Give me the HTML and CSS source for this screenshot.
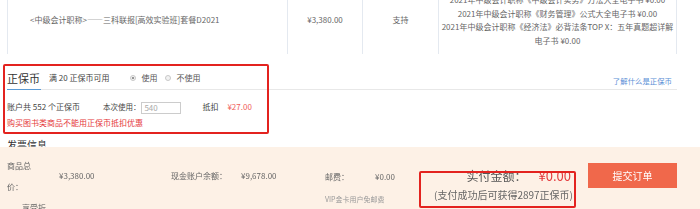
FILE: index.html
```html
<!DOCTYPE html>
<html lang="zh-CN">
<head>
<meta charset="utf-8">
<title>订单确认</title>
<link rel="stylesheet" href="styles.css">
</head>
<body>
<div class="order-table">
  <div class="cell cell-name">&lt;中级会计职称&gt;——三科联报[高效实验班]套餐D2021</div>
  <div class="cell cell-center">¥3,380.00</div>
  <div class="cell cell-center">支持</div>
  <div class="cell cell-gifts">
    <div>2021年中级会计职称《中级会计实务》方法大全电子书 ¥0.00</div>
    <div>2021年中级会计职称《财务管理》公式大全电子书 ¥0.00</div>
    <div>2021年中级会计职称《经济法》必背法条TOP X：五年真题超详解电子书 ¥0.00</div>
  </div>
</div>

<section class="coin">
  <div class="tabs">
    <div class="tab-active">正保币</div>
    <div class="tab-note">满 20 正保币可用</div>
    <label class="radio"><span class="dot checked"></span>使用</label>
    <label class="radio"><span class="dot"></span>不使用</label>
    <a class="learn">了解什么是正保币</a>
  </div>
  <div class="coin-row">
    <span class="balance">账户共 552 个正保币</span>
    <span class="use-label">本次使用：</span>
    <span class="input">540</span>
    <span class="deduct">抵扣</span>
    <span class="deduct-amt">¥27.00</span>
  </div>
  <div class="warn">购买图书类商品不能用正保币抵扣优惠</div>
  <div class="mark mark-coin"></div>
</section>

<h3 class="invoice">发票信息</h3>

<footer class="bar">
  <div class="grp grp-total">
    <div class="total-label">
      <div class="narrow">商品总价：</div>
      <div class="discount">享受折</div>
    </div>
    <div class="val">¥3,380.00</div>
  </div>
  <div class="grp grp-cash">
    <div class="lbl lbl-cash">现金账户余额：</div>
    <div class="val">¥9,678.00</div>
  </div>
  <div class="grp grp-post">
    <div class="post-line">
      <div class="lbl lbl-post">邮费：</div>
      <div>¥0.00</div>
    </div>
    <div class="vip">VIP金卡用户免邮费</div>
  </div>
  <div class="pay">
    <div class="pay-line"><span class="pay-lbl">实付金额：</span><span class="pay-amt">¥0.00</span></div>
    <div class="pay-note">(支付成功后可获得2897正保币)</div>
  </div>
  <button class="submit">提交订单</button>
  <div class="mark mark-pay"></div>
</footer>
</body>
</html>
```

FILE: styles.css
```css
* { box-sizing: border-box; }
html, body { margin: 0; padding: 0; }
body {
  width: 700px;
  height: 209px;
  overflow: hidden;
  background: #fff;
  font-family: "Noto Sans CJK SC", "Liberation Sans", sans-serif;
  font-size: 8px;
  color: #666;
}

/* order table */
.order-table {
  display: grid;
  grid-template-columns: 280px 75px 76px 238px;
  width: 670px;
  height: 68px;
  margin: -14px 0 0 7px;
  border-right: 1px solid #e4e9f0;
}
.cell {
  border-left: 1px solid #e4e9f0;
  display: flex;
  align-items: center;
  line-height: 13.5px;
}
.cell-name { padding-left: 22px; }
.cell-center { justify-content: center; }
.cell-gifts {
  flex-direction: column;
  justify-content: center;
  text-align: center;
  padding: 0 1px;
}

/* coin section */
.coin {
  position: relative;
  margin: 12px 23px 0 7px;
}
.tabs {
  display: flex;
  align-items: center;
  height: 24px;
  border-bottom: 1px solid #e8e8e8;
}
.tab-active {
  align-self: stretch;
  display: flex;
  align-items: center;
  font-size: 11px;
  color: #333;
  padding-right: 1px;
  margin-bottom: -1px;
  border-bottom: 1px solid #5b9bd5;
}
.tab-note { margin-left: 8px; color: #444; }
.radio {
  display: flex;
  align-items: center;
  color: #555;
}
.radio:nth-of-type(1) { margin-left: 21px; }
.radio + .radio { margin-left: 8px; }
.dot {
  width: 6px;
  height: 6px;
  border-radius: 50%;
  border: 1px solid #c8c8c8;
  background: #f2f2f2;
  margin-right: 5px;
  position: relative;
}
.dot.checked::after {
  content: "";
  position: absolute;
  left: 1px; top: 1px;
  width: 2px; height: 2px;
  border-radius: 50%;
  background: #777;
}
.learn {
  margin-left: auto;
  margin-right: 5px;
  margin-top: 5px;
  font-size: 7.4px;
  color: #5b8fd6;
}
.coin-row {
  display: flex;
  align-items: center;
  margin-top: 9px;
  line-height: 14px;
  color: #444;
}
.use-label { margin-left: 23px; font-size: 7.5px; }
.input {
  width: 40px;
  height: 12px;
  margin-left: 1px;
  margin-top: 3px;
  border: 1px solid #ccc;
  line-height: 10px;
  padding-left: 2px;
  color: #aaa;
}
.deduct { margin-left: 21px; }
.deduct-amt { margin-left: 9px; color: #f0605a; }
.warn {
  margin-top: 3px;
  line-height: 12px;
  color: #e5383b;
}
.mark {
  position: absolute;
  border: 2px solid #e3231f;
  border-radius: 2px;
  pointer-events: none;
}
.mark-coin { left: -4px; top: -2px; width: 266px; height: 70px; }

.invoice {
  margin: 9px 0 0 7px;
  font-size: 10px;
  line-height: 14px;
  font-weight: normal;
  color: #333;
}

/* bottom bar */
.bar {
  position: fixed;
  left: 0; right: 0; bottom: 0;
  height: 62px;
  background: #fdf1e6;
  display: flex;
  align-items: flex-start;
  padding: 8px 0 0 7px;
}
.grp { display: flex; }
.grp-total { width: 164px; }
.total-label { width: 24px; line-height: 21px; }
.narrow { width: 24px; }
.discount { padding-left: 15px; white-space: nowrap; }
.val { margin-left: 28px; line-height: 42px; }
.grp-cash { width: 154px; }
.lbl-cash { width: 70px; line-height: 42px; white-space: nowrap; }
.grp-cash .val { margin-left: 0; }
.grp-post { flex-direction: column; width: 90px; }
.post-line { display: flex; padding-top: 10.5px; line-height: 21px; }
.lbl-post { width: 50px; }
.vip { font-size: 7px; line-height: 24px; color: #999; white-space: nowrap; }
.pay {
  margin-left: auto;
  text-align: right;
  padding-top: 13px;
}
.pay-line { line-height: 16px; padding-right: 2px; }
.pay-lbl { font-size: 12px; color: #555; }
.pay-amt { font-size: 13px; color: #e4393c; margin-left: 12px; }
.pay-note { font-size: 10px; line-height: 18px; color: #666; }
.submit {
  margin: 8px 23px 0 15px;
  width: 89px;
  height: 25px;
  border: none;
  background: #f0684b;
  color: #fff;
  font-family: inherit;
  font-size: 10px;
  padding: 0;
}
.mark-pay { left: 419px; top: 24px; width: 157px; height: 37px; }
```
